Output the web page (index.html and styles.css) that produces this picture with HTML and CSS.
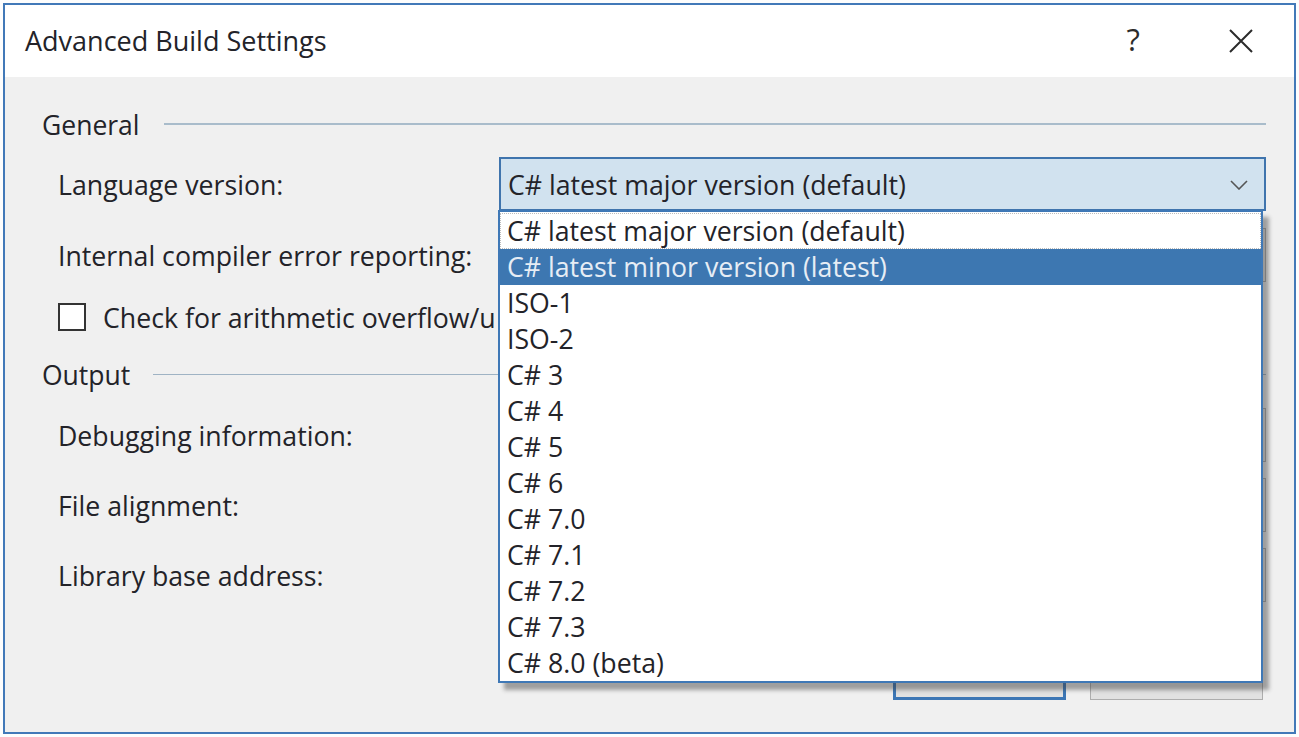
FILE: index.html
```html
<!DOCTYPE html>
<html lang="en">
<head>
<meta charset="utf-8">
<title>Advanced Build Settings</title>
<link rel="stylesheet" href="styles.css">
</head>
<body>
<div class="dialog">
  <div class="titlebar">
    <div class="title">Advanced Build Settings</div>
    <div class="title-buttons">
      <span class="help">?</span>
      <svg class="close" width="26" height="26" viewBox="0 0 26 26"><path d="M2 2 L24 24 M24 2 L2 24" stroke="#2b2b2b" stroke-width="2" fill="none"/></svg>
    </div>
  </div>
  <div class="content">
    <div class="group-header first"><span>General</span><div class="rule"></div></div>
    <div class="row">
      <div class="label">Language version:</div>
      <div class="combo active">
        <span>C# latest major version (default)</span>
        <svg class="chev" width="18" height="10" viewBox="0 0 18 10"><path d="M1 1 L9 9 L17 1" stroke="#555" stroke-width="1.6" fill="none"/></svg>
      </div>
    </div>
    <div class="row r2">
      <div class="label">Internal compiler error reporting:</div>
      <div class="combo"></div>
    </div>
    <div class="check-row">
      <span class="checkbox"></span>
      <span class="label check-label">Check for arithmetic overflow/underflow</span>
    </div>
    <div class="group-header output"><span>Output</span><div class="rule"></div></div>
    <div class="row r3">
      <div class="label">Debugging information:</div>
      <div class="combo"></div>
    </div>
    <div class="row r4">
      <div class="label">File alignment:</div>
      <div class="combo"></div>
    </div>
    <div class="row r4">
      <div class="label">Library base address:</div>
      <div class="combo"></div>
    </div>
    <div class="buttons">
      <button class="btn ok" aria-label="OK"></button>
      <button class="btn cancel" aria-label="Cancel"></button>
    </div>
  </div>
  <ul class="dropdown">
    <li class="focused">C# latest major version (default)</li>
    <li class="selected">C# latest minor version (latest)</li>
    <li>ISO-1</li>
    <li>ISO-2</li>
    <li>C# 3</li>
    <li>C# 4</li>
    <li>C# 5</li>
    <li>C# 6</li>
    <li>C# 7.0</li>
    <li>C# 7.1</li>
    <li>C# 7.2</li>
    <li>C# 7.3</li>
    <li>C# 8.0 (beta)</li>
  </ul>
</div>
</body>
</html>
```
FILE: styles.css
```css
* { box-sizing: border-box; }
html, body { margin: 0; padding: 0; background: #fdfdfd; }
body {
  font-family: "Open Sans", "Noto Sans", sans-serif;
  color: #232329;
  width: 1299px;
  height: 737px;
  overflow: hidden;
  padding: 3px 3px 3px 3px;
}
.dialog {
  position: relative;
  width: 1293px;
  height: 731px;
  border: 2px solid #4279b8;
  background: #f0f0f0;
  display: flex;
  flex-direction: column;
}
.titlebar {
  height: 72px;
  background: #ffffff;
  display: flex;
  align-items: center;
  justify-content: space-between;
  padding: 0 40px 0 20px;
  flex: none;
}
.title { font-size: 27px; margin-top: -2px; }
.title-buttons { display: flex; align-items: center; gap: 88px; }
.help { font-size: 31px; color: #2b2b2b; margin-top: -4px; }
.close { display: block; }
.content {
  flex: 1;
  display: flex;
  flex-direction: column;
  padding: 0 28px 0 37px;
}
.group-header {
  display: flex;
  align-items: center;
  height: 30px;
  font-size: 26.5px;
  flex: none;
}
.group-header.first { margin-top: 33px; }
.group-header .rule {
  flex: 1;
  height: 2px;
  background: #a9bccb;
  margin-left: 24px;
  margin-top: -2px;
}
.group-header.output { margin-top: 28px; }
.group-header.output .rule { margin-left: 23px; height: 1px; background: #9fb3c4; }
.row {
  display: flex;
  align-items: center;
  justify-content: space-between;
  height: 54px;
  padding-left: 16px;
  margin-top: 17px;
  flex: none;
}
.label { font-size: 26.7px; white-space: nowrap; }
.combo {
  width: 767px;
  height: 54px;
  border: 1px solid #adadad;
  background: #e5e5e5;
  display: flex;
  align-items: center;
  justify-content: space-between;
  padding: 0 16px 0 7px;
  font-size: 26.7px;
  flex: none;
}
.combo.active {
  background: #d1e2ef;
  border: 2px solid #3f74ad;
}
.chev { display: block; margin-top: 2px; }
.check-row {
  display: flex;
  align-items: center;
  height: 30px;
  margin-top: 20px;
  padding-left: 16px;
  flex: none;
}
.checkbox {
  width: 28px;
  height: 28px;
  border: 2px solid #333;
  background: #fff;
  margin-right: 17px;
  flex: none;
}
.check-label {
  width: 393px;
  overflow: hidden;
}
.row.r3 { margin-top: 18px; }
.row.r4 { margin-top: 16px; }
.buttons {
  margin-top: auto;
  margin-bottom: 32px;
  display: flex;
  justify-content: flex-end;
  gap: 24px;
  padding-right: 3px;
}
.btn {
  width: 173px;
  height: 46px;
  background: #e1e1e1;
  border: 1px solid #adadad;
}
.btn.ok { border: 3px solid #3c76b5; }
.dropdown {
  position: absolute;
  left: 493px;
  top: 205px;
  width: 765px;
  height: 473px;
  margin: 0;
  padding: 1px 0 0 0;
  list-style: none;
  background: #ffffff;
  border: 2px solid #3f78b6;
  box-shadow: 6px 7px 4px rgba(60, 60, 60, 0.45);
}
.dropdown li {
  height: 36px;
  line-height: 36px;
  font-size: 26.7px;
  padding-left: 7px;
  white-space: nowrap;
}
.dropdown li.focused { outline: 1px dotted #bcbcbc; outline-offset: -1px; }
.dropdown li.selected { background: #3d77b1; color: #e6edf5; }
```
